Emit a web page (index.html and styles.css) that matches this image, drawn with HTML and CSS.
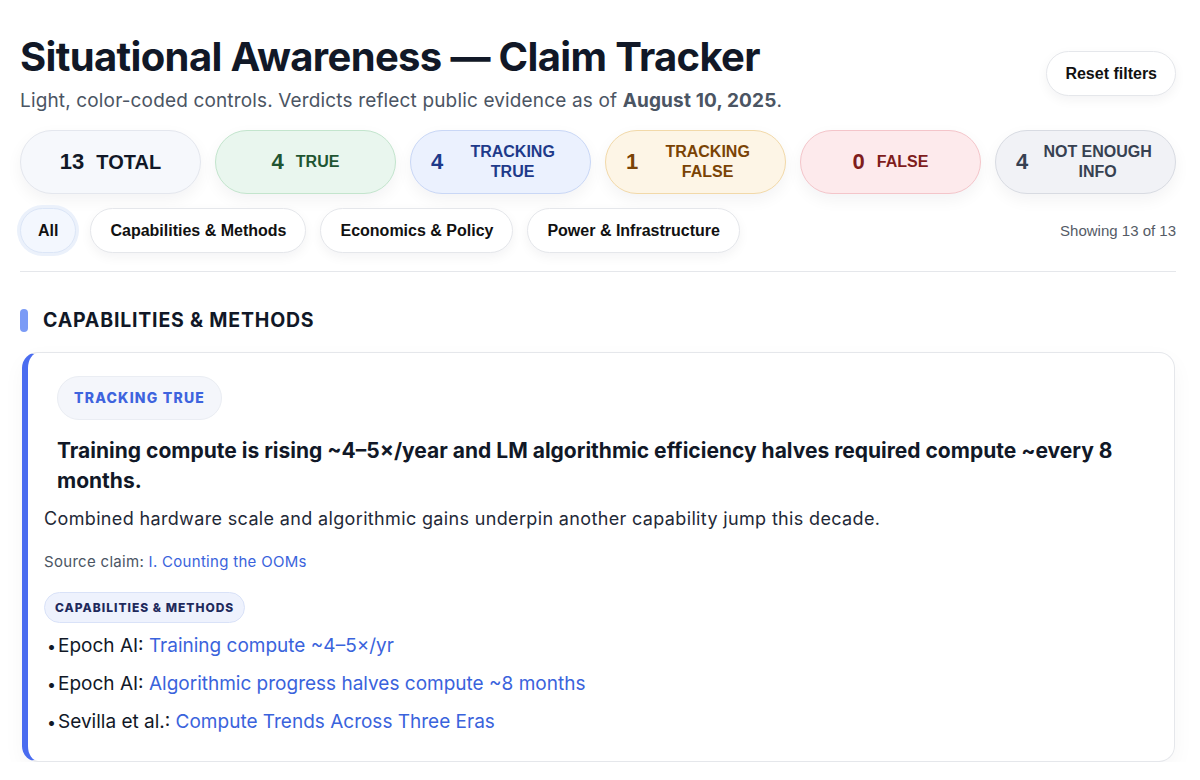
FILE: index.html
```html
<!DOCTYPE html>
<html lang="en">

<head>
	<meta charset="UTF-8">
	<title>Situational Awareness — Claim Tracker</title>
	<meta name="viewport" content="width=device-width, initial-scale=1.0">
	<link rel="stylesheet" href="styles.css">
</head>

<body>
	<div class="page">
		<header class="top">
			<div>
				<h1 class="title">Situational Awareness — Claim Tracker</h1>
				<p class="sub">Light, color-coded controls. Verdicts reflect public evidence as of <b>August 10, 2025</b>.</p>
			</div>
			<button class="reset">Reset filters</button>
		</header>

		<div class="stats">
			<div class="stat total"><span class="n">13</span><span class="l">TOTAL</span></div>
			<div class="stat true"><span class="n">4</span><span class="l">TRUE</span></div>
			<div class="stat ttrue"><span class="n">4</span><span class="l">TRACKING TRUE</span></div>
			<div class="stat tfalse"><span class="n">1</span><span class="l">TRACKING FALSE</span></div>
			<div class="stat false"><span class="n">0</span><span class="l">FALSE</span></div>
			<div class="stat nei"><span class="n">4</span><span class="l">NOT ENOUGH INFO</span></div>
		</div>

		<div class="filters">
			<button class="chip on">All</button>
			<button class="chip">Capabilities &amp; Methods</button>
			<button class="chip">Economics &amp; Policy</button>
			<button class="chip">Power &amp; Infrastructure</button>
			<span class="count">Showing 13 of 13</span>
		</div>
		<hr class="rule">

		<h2 class="sec">CAPABILITIES &amp; METHODS</h2>

		<article class="card">
			<div class="head">
				<span class="verdict">TRACKING TRUE</span>
				<h3 class="claim">Training compute is rising ~4–5×/year and LM algorithmic efficiency halves required compute ~every 8 months.</h3>
			</div>
			<p class="desc">Combined hardware scale and algorithmic gains underpin another capability jump this decade.</p>
			<p class="src">Source claim: <a href="#">I. Counting the OOMs</a></p>
			<span class="tag">CAPABILITIES &amp; METHODS</span>
			<ul class="links">
				<li>Epoch AI: <a href="#">Training compute ~4–5×/yr</a></li>
				<li>Epoch AI: <a href="#">Algorithmic progress halves compute ~8 months</a></li>
				<li>Sevilla et al.: <a href="#">Compute Trends Across Three Eras</a></li>
			</ul>
		</article>
	</div>
</body>

</html>
```

FILE: styles.css
```css
body {
	margin: 0;
	background: #fff;
	color: #111827;
	font-family: Inter, "Noto Sans", sans-serif;
}

.page {
	padding: 33px 24px 0 20px;
}

.top {
	display: flex;
	justify-content: space-between;
	align-items: center;
}

.title {
	margin: 0;
	font-size: 40px;
	line-height: 48px;
	font-weight: 700;
	letter-spacing: -0.65px;
}

.sub {
	margin: 7px 0 0;
	font-size: 19px;
	line-height: 26px;
	letter-spacing: 0.15px;
	color: #4b5563;
}

.sub b {
	font-weight: 700;
}

button {
	font-family: "Liberation Sans", Arial, sans-serif;
	font-weight: bold;
	font-size: 16px;
	color: #111;
	background: #fff;
	border: 1px solid #e5e7eb;
	border-radius: 999px;
	height: 45px;
	padding: 0 19px;
	box-shadow: 0 4px 12px rgba(15, 23, 42, 0.05);
}

.reset {
	padding: 0 18px;
}

/* summary pills */
.stats {
	display: grid;
	grid-template-columns: repeat(6, 1fr);
	gap: 14px;
	margin-top: 16px;
}

.stat {
	height: 64px;
	box-sizing: border-box;
	border: 1px solid;
	border-radius: 999px;
	padding: 0 20px;
	display: flex;
	align-items: center;
	justify-content: center;
	gap: 12px;
	font-family: "Liberation Sans", Arial, sans-serif;
	font-weight: bold;
	box-shadow: 0 6px 16px rgba(15, 23, 42, 0.05);
}

.stat .n {
	font-size: 22px;
}

.stat .l {
	font-size: 16px;
	line-height: 20px;
	text-align: center;
}

.total {
	background: #f6f8fc;
	border-color: #e4e7ee;
	color: #111827;
}

.total .l {
	font-size: 20px;
}

.true {
	background: #e9f6ee;
	border-color: #c3e5cd;
	color: #1f5532;
}

.ttrue {
	background: #ebf1fe;
	border-color: #c9d7f6;
	color: #1e3a8a;
}

.tfalse {
	background: #fdf5e6;
	border-color: #f2d9a9;
	color: #7a4305;
}

.false {
	background: #fdeaec;
	border-color: #f4c5ca;
	color: #7f1d1d;
}

.nei {
	background: #f1f2f6;
	border-color: #d8dbe2;
	color: #374151;
}

/* category filters */
.filters {
	display: flex;
	align-items: center;
	gap: 14px;
	margin-top: 14px;
}

.chip.on {
	padding: 0 17px;
	background: #f3f7fe;
	border-color: #dce6f7;
	box-shadow: 0 0 0 3px #ebf1fb;
}

.count {
	margin-left: auto;
	font-family: "Liberation Sans", Arial, sans-serif;
	font-size: 15px;
	color: #555b66;
}

.rule {
	border: 0;
	border-top: 1px solid #e5e7eb;
	margin: 18px 0 0;
}

.sec {
	margin: 36px 0 0;
	display: flex;
	align-items: center;
	gap: 15px;
	font-size: 19.5px;
	line-height: 24px;
	font-weight: 700;
	letter-spacing: 0.8px;
}

.sec::before {
	content: "";
	width: 8px;
	height: 23px;
	border-radius: 4px;
	background: #7b9bf6;
}

/* claim card */
.card {
	margin: 20px 1px 0 2px;
	border: 1px solid #e5e7eb;
	border-left: 6px solid #4a6cf0;
	border-radius: 16px;
	padding: 23px 16px 25px;
	box-shadow: 0 8px 22px rgba(15, 23, 42, 0.04);
}

.head {
	padding: 0 13px;
}

.verdict {
	display: inline-block;
	height: 44px;
	line-height: 42px;
	box-sizing: border-box;
	padding: 0 16px;
	border: 1px solid #eaedf3;
	border-radius: 999px;
	background: #f4f6fb;
	color: #3e64de;
	font-size: 14px;
	font-weight: 800;
	letter-spacing: 1.2px;
}

.claim {
	margin: 16px 0 0;
	font-size: 21px;
	line-height: 30px;
	font-weight: 700;
}

.desc {
	margin: 9px 0 0;
	font-size: 18px;
	line-height: 28px;
	letter-spacing: 0.35px;
	color: #1f2937;
}

.src {
	margin: 18px 0 0;
	font-size: 15px;
	line-height: 22px;
	letter-spacing: 0.3px;
	color: #4b5563;
}

a {
	color: #3a63dc;
	text-decoration: none;
}

.tag {
	display: inline-block;
	margin-top: 19px;
	height: 31px;
	line-height: 29px;
	box-sizing: border-box;
	padding: 0 10px;
	border: 1px solid #d9e2f8;
	border-radius: 999px;
	background: #eef2fd;
	color: #1f2a5c;
	font-size: 12px;
	font-weight: 800;
	letter-spacing: 1px;
}

.links {
	margin: 9px 0 0;
	padding: 0;
	list-style: none;
}

.links li {
	font-size: 19px;
	line-height: 28px;
	margin-bottom: 10px;
}

.links li::before {
	content: "•";
	display: inline-block;
	width: 14px;
	font-size: 16px;
	text-align: left;
	text-indent: 3px;
}

.links li:last-child {
	margin-bottom: 0;
}
```
